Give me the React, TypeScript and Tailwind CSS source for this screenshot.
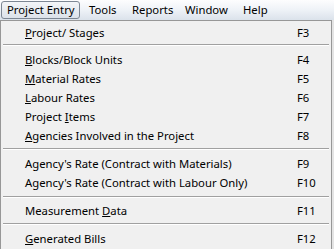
import React from "react";

type Item = { label: string; u: number; key: string } | { sep: number; line: number };

const items: Item[] = [
  { label: "Project/ Stages", u: 0, key: "F3" },
  { sep: 8, line: 2 },
  { label: "Blocks/Block Units", u: 0, key: "F4" },
  { label: "Material Rates", u: 0, key: "F5" },
  { label: "Labour Rates", u: 0, key: "F6" },
  { label: "Project Items", u: 8, key: "F7" },
  { label: "Agencies Involved in the Project", u: 0, key: "F8" },
  { sep: 9, line: 3 },
  { label: "Agency's Rate (Contract with Materials)", u: -1, key: "F9" },
  { label: "Agency's Rate (Contract with Labour Only)", u: -1, key: "F10" },
  { sep: 9, line: 4 },
  { label: "Measurement Data", u: 12, key: "F11" },
  { sep: 9, line: 3 },
  { label: "Generated Bills", u: 0, key: "F12" },
];

function Label({ text, u }: { text: string; u: number }) {
  if (u < 0) return <span>{text}</span>;
  return (
    <span>
      {text.slice(0, u)}
      <span className="underline underline-offset-[1px]">{text[u]}</span>
      {text.slice(u + 1)}
    </span>
  );
}

export default function App() {
  const font = { fontFamily: '"Noto Sans", "Open Sans", sans-serif' };
  return (
    <div className="w-[334px] h-[249px] overflow-hidden bg-[#e4e4e4] text-black text-[11.3px] whitespace-nowrap" style={font}>
      {/* menu bar */}
      <div className="h-[20px] flex items-stretch bg-gradient-to-b from-[#fdfdfe] via-[#eef2f7] to-[#dbe2eb] leading-none">
        <div className="ml-[1px] mt-[1px] mb-[1px] w-[79px] pl-[5px] flex items-center rounded-[3px] border border-[#7d8794] bg-gradient-to-b from-[#f3f5f8] to-[#dce2ea]">
          Project Entry
        </div>
        <div className="w-[44px] pl-[9px] flex items-center">Tools</div>
        <div className="w-[53px] pl-[8px] flex items-center">Reports</div>
        <div className="w-[58px] pl-[8px] flex items-center">Window</div>
        <div className="pl-[8px] flex items-center">Help</div>
      </div>
      {/* dropdown */}
      <div className="w-[332px] h-[229px] bg-[#f0f0f0] border-t border-l border-r border-[#979797] pt-[2px] flex flex-col">
        {items.map((it, i) =>
          "sep" in it ? (
            <div key={i} className={it.sep === 8 ? "h-[8px] pl-[2px] pr-[2px]" : "h-[9px] pl-[2px] pr-[2px]"}>
              <div
                className={
                  it.line === 2
                    ? "mt-[2px] h-[1px] bg-[#a0a0a0]"
                    : it.line === 3
                    ? "mt-[3px] h-[1px] bg-[#a0a0a0]"
                    : "mt-[4px] h-[1px] bg-[#a0a0a0]"
                }
              />
              <div className="h-[1px] bg-white" />
            </div>
          ) : (
            <div key={i} className="h-[19px] flex items-center leading-none">
              <div className="pl-[24px] w-[296px]">
                <Label text={it.label} u={it.u} />
              </div>
              <div>{it.key}</div>
            </div>
          )
        )}
      </div>
    </div>
  );
}
